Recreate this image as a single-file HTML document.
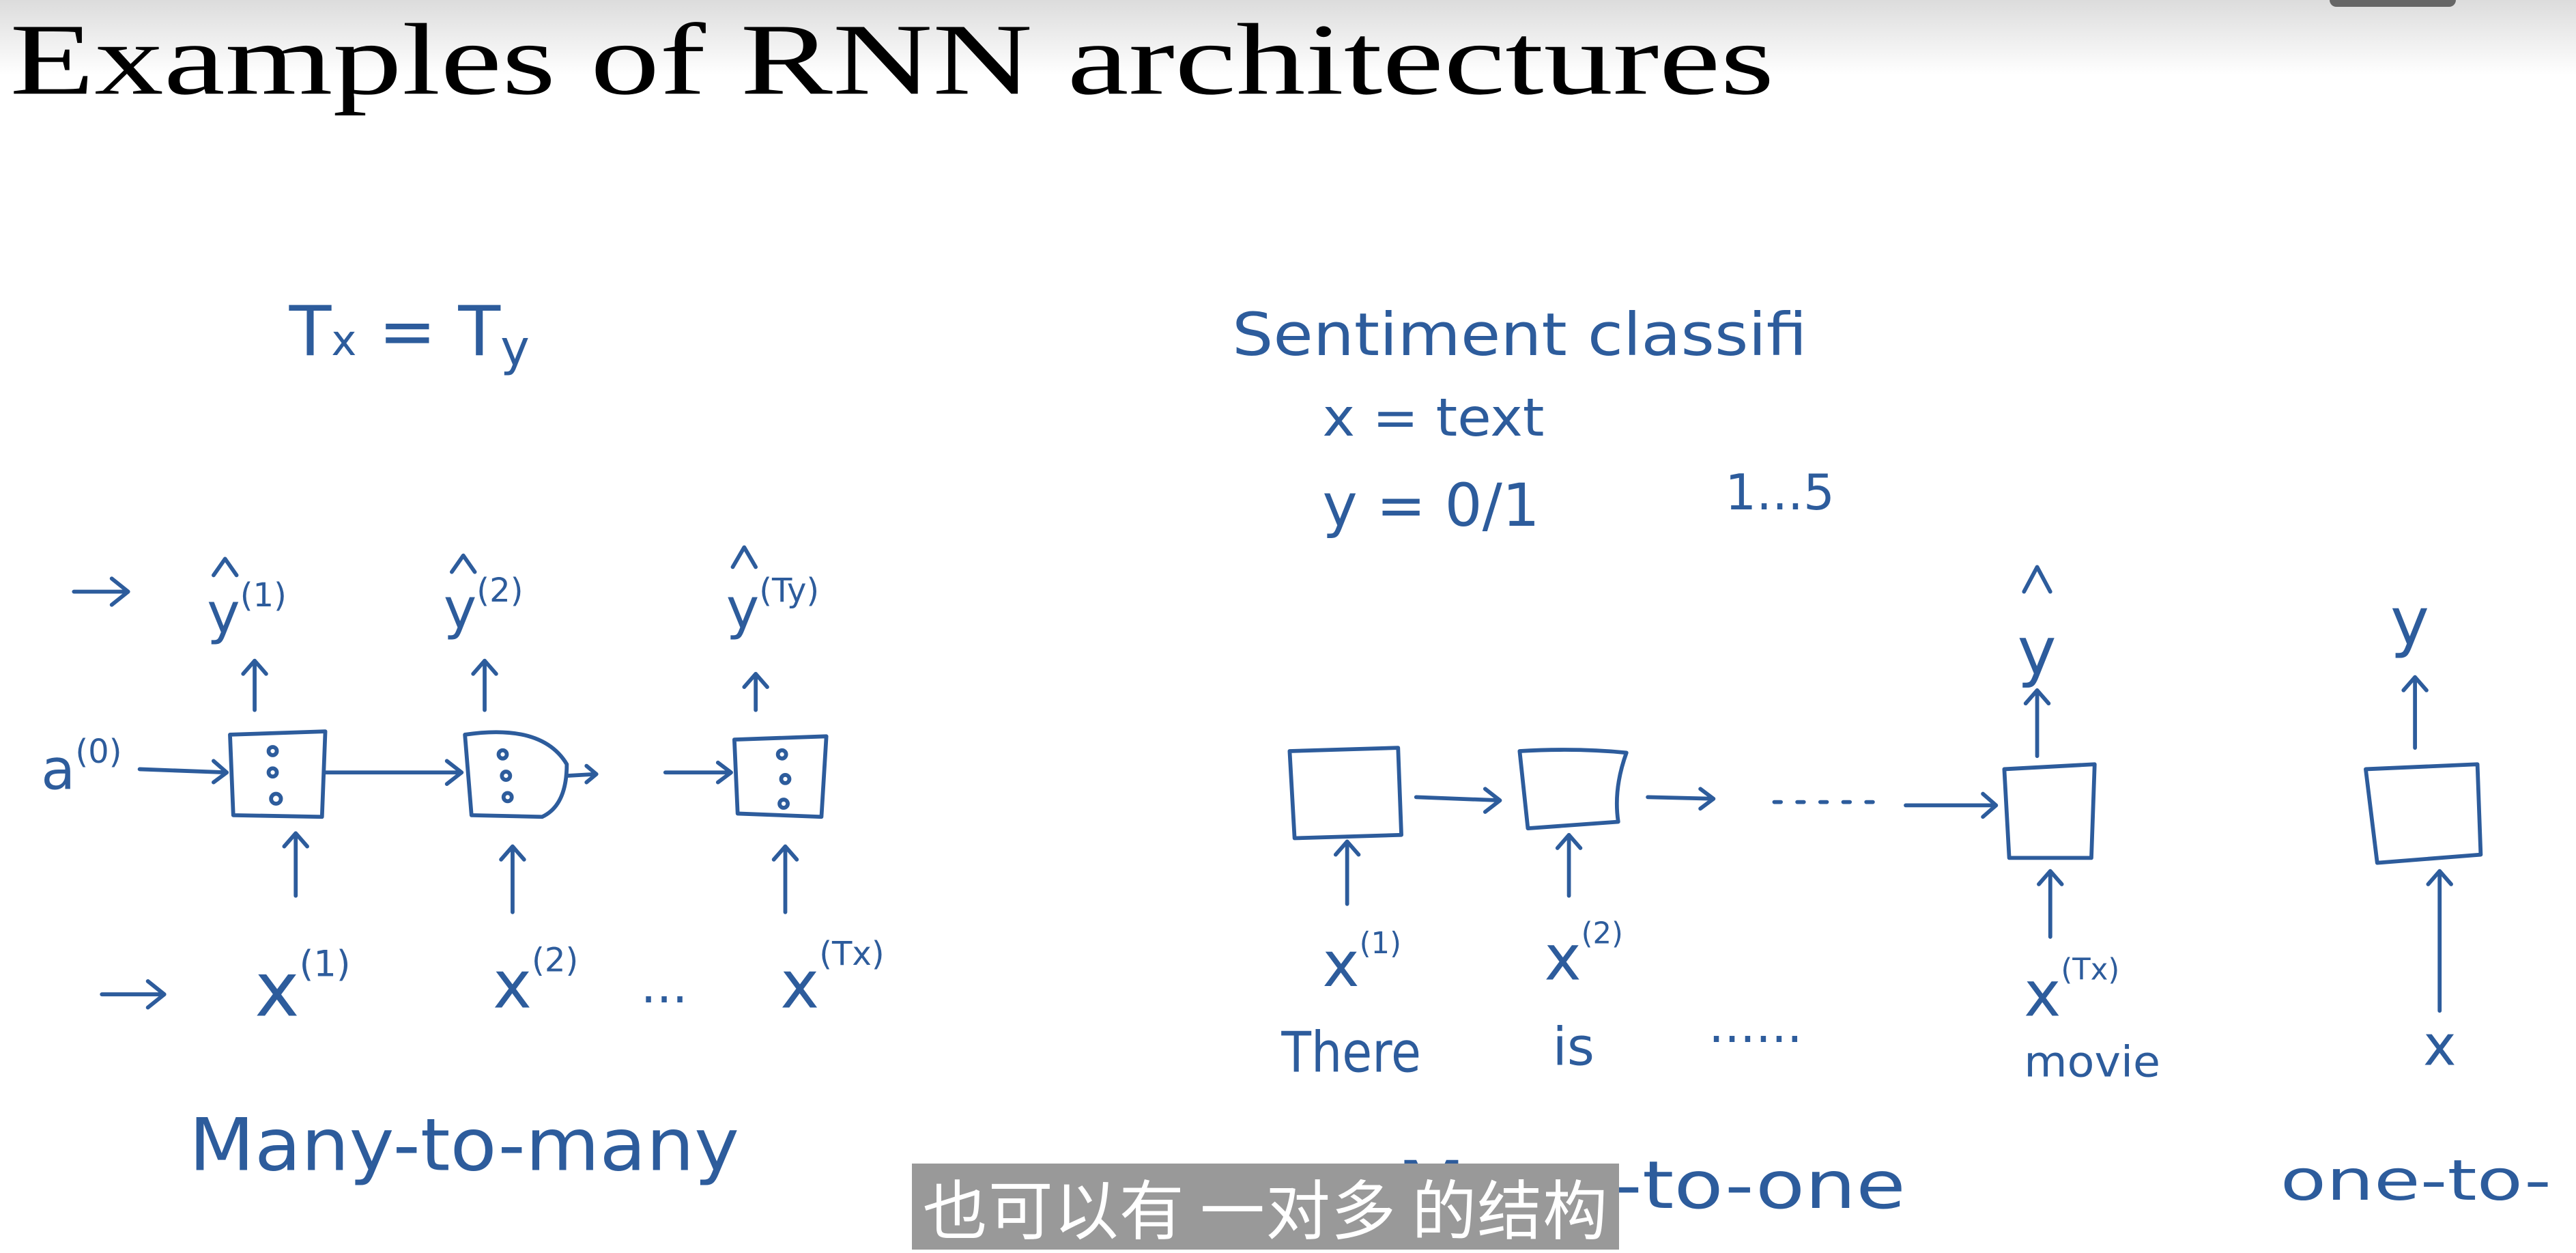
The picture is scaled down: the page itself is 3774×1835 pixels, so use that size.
<!DOCTYPE html>
<html><head><meta charset="utf-8">
<style>
html,body{margin:0;padding:0;}
body{width:3774px;height:1830px;overflow:hidden;position:relative;background:#fff;}
#grad{position:absolute;left:0;top:0;width:3774px;height:110px;background:linear-gradient(#dcdcdc,#ffffff);}
#cap{position:absolute;left:1336px;top:1704px;width:1036px;height:126px;background:#999;color:#fff;font:95px "Noto Sans CJK SC","WenQuanYi Zen Hei",sans-serif;line-height:126px;text-align:center;letter-spacing:1px;}
#tr{position:absolute;left:3413px;top:0;width:185px;height:10px;background:#666;border-radius:0 0 40px 40px;}
svg{position:absolute;left:0;top:0;}
.h{font-family:"DejaVu Sans",sans-serif;fill:#2d5c9c;}
</style></head><body>
<div id="grad"></div>
<div id="tr"></div>
<svg width="3774" height="1830" viewBox="0 0 1568 760.3">
<text x="6" y="57" font-family="Liberation Serif" font-size="62" textLength="1074" lengthAdjust="spacingAndGlyphs" fill="#000">Examples of RNN architectures</text>
<g fill="none" stroke="#2d5c9c" stroke-width="2.4" stroke-linecap="round" stroke-linejoin="round">
<!-- left boxes -->
<path d="M140 447 L198 445 L196 497 L142 496 Z"/>
<path d="M283 447 Q330 440 345 465 Q345 490 330 497 L287 496 Z"/>
<path d="M447 450 L503 448 L500 497 L449 495 Z"/>
<!-- horiz arrows -->
<path d="M85 468 L138 470 M130 463 L138 470 L130 476"/>
<path d="M198 470 L281 470 M272 463 L281 470 L272 477"/>
<path d="M345 472 L363 471 M357 466 L363 471 L357 476"/>
<path d="M405 470 L445 470 M437 464 L445 470 L437 476"/>
<path d="M45 360 L78 360 M68 352 L78 360 L68 368"/>
<path d="M62 605 L100 605 M90 597 L100 605 L90 613"/>
<!-- up arrows top -->
<path d="M155 432 L155 402 M148 410 L155 402 L162 410"/>
<path d="M295 432 L295 402 M288 410 L295 402 L302 410"/>
<path d="M460 432 L460 410 M453 418 L460 410 L467 418"/>
<!-- up arrows bottom -->
<path d="M180 545 L180 507 M173 515 L180 507 L187 515"/>
<path d="M312 555 L312 515 M305 523 L312 515 L319 523"/>
<path d="M478 555 L478 515 M471 523 L478 515 L485 523"/>
<!-- dots in boxes -->
<circle cx="166" cy="457" r="2.5"/><circle cx="166" cy="470" r="2.5"/><circle cx="168" cy="486" r="3"/>
<circle cx="306" cy="459" r="2.5"/><circle cx="308" cy="472" r="2.5"/><circle cx="309" cy="485" r="2.5"/>
<circle cx="476" cy="459" r="2.5"/><circle cx="478" cy="474" r="2.5"/><circle cx="477" cy="489" r="2.5"/>
<!-- right boxes -->
<path d="M785 457 L851 455 L853 508 L788 510 Z"/>
<path d="M925 457 Q960 455 990 458 Q982 480 985 500 L930 504 Z"/>
<path d="M1220 468 L1275 465 L1273 522 L1223 522 Z"/>
<path d="M1440 468 L1508 465 L1510 520 L1447 525 Z"/>
<path d="M862 485 L913 487 M904 480 L913 487 L904 494"/>
<path d="M1003 485 L1043 486 M1035 480 L1043 486 L1035 492"/>
<path d="M1080 488 L1150 488" stroke-dasharray="4 10"/>
<path d="M1160 490 L1215 490 M1207 483 L1215 490 L1207 497"/>
<path d="M820 550 L820 512 M813 520 L820 512 L827 520"/>
<path d="M955 545 L955 508 M948 516 L955 508 L962 516"/>
<path d="M1248 570 L1248 530 M1241 538 L1248 530 L1255 538"/>
<path d="M1240 460 L1240 420 M1233 428 L1240 420 L1247 428"/>
<path d="M1470 455 L1470 412 M1463 420 L1470 412 L1477 420"/>
<path d="M1485 615 L1485 530 M1478 538 L1485 530 L1492 538"/>
<path d="M1232 360 L1240 345 L1248 360"/>
<path d="M130 350 L137 340 L144 350 M275 348 L282 338 L289 348 M446 345 L453 333 L460 345"/>
</g>
<g class="h">
<text x="176" y="216" font-size="42">T<tspan font-size="26">x</tspan> = T<tspan font-size="30" dy="6">y</tspan></text>
<text x="126" y="385" font-size="34">y<tspan font-size="20" dy="-16">(1)</tspan></text>
<text x="270" y="382" font-size="34">y<tspan font-size="20" dy="-16">(2)</tspan></text>
<text x="442" y="382" font-size="34">y<tspan font-size="20" dy="-16">(Ty)</tspan></text>
<text x="25" y="480" font-size="34">a<tspan font-size="20" dy="-16">(0)</tspan></text>
<text x="155" y="618" font-size="46">x<tspan font-size="22" dy="-24">(1)</tspan></text>
<text x="300" y="613" font-size="40">x<tspan font-size="20" dy="-22">(2)</tspan></text>
<text x="390" y="610" font-size="30">...</text>
<text x="475" y="613" font-size="40">x<tspan font-size="20" dy="-26">(Tx)</tspan></text>
<text x="115" y="712" font-size="44" textLength="335" lengthAdjust="spacingAndGlyphs">Many-to-many</text>
<text x="750" y="216" font-size="36" textLength="350" lengthAdjust="spacingAndGlyphs">Sentiment classifi</text>
<text x="805" y="265" font-size="32" textLength="135" lengthAdjust="spacingAndGlyphs">x = text</text>
<text x="805" y="320" font-size="36">y = 0/1</text>
<text x="1050" y="310" font-size="30">1...5</text>
<text x="805" y="600" font-size="38">x<tspan font-size="18" dy="-20">(1)</tspan></text>
<text x="940" y="596" font-size="38">x<tspan font-size="18" dy="-22">(2)</tspan></text>
<text x="1232" y="618" font-size="38">x<tspan font-size="18" dy="-22">(Tx)</tspan></text>
<text x="780" y="652" font-size="34" textLength="85" lengthAdjust="spacingAndGlyphs">There</text>
<text x="945" y="648" font-size="32">is</text>
<text x="1040" y="634" font-size="30">......</text>
<text x="1232" y="655" font-size="26" textLength="83" lengthAdjust="spacingAndGlyphs">movie</text>
<text x="1228" y="410" font-size="40">y</text>
<text x="1455" y="392" font-size="40">y</text>
<text x="1475" y="648" font-size="34">x</text>
<text x="850" y="735" font-size="40" textLength="310" lengthAdjust="spacingAndGlyphs">Many-to-one</text>
<text x="1388" y="730" font-size="34" textLength="165" lengthAdjust="spacingAndGlyphs">one-to-</text>
</g>
</svg>
<div id="cap">也可以有 一对多 的结构</div>
</body></html>
